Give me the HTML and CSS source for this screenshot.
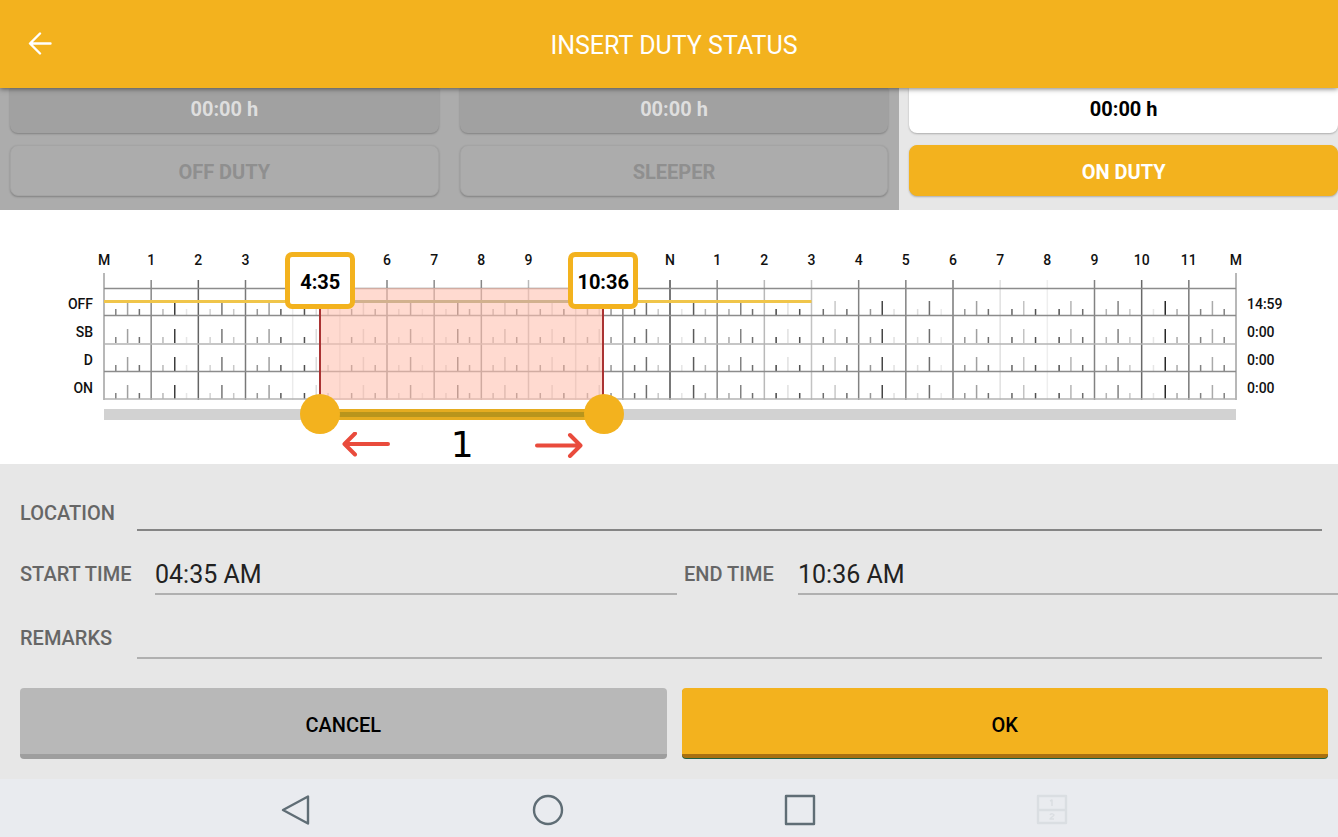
FILE: index.html
```html
<!DOCTYPE html>
<html lang="en">
<head>
<meta charset="utf-8">
<meta name="viewport" content="width=device-width, initial-scale=1">
<title>Insert Duty Status</title>
<link rel="stylesheet" href="styles.css">
</head>
<body>
<header class="app-bar">
  <button class="back" type="button" aria-label="Back">
    <svg width="24" height="24" viewBox="0 0 24 24" fill="none" stroke="currentColor" stroke-width="2.4" stroke-linecap="round" stroke-linejoin="round"><path d="M12 1.500 2 11.500l10 10M2.500 11.500H22.500"/></svg>
  </button>
  <h1 class="title">INSERT DUTY STATUS</h1>
</header>

<main class="content">
  <section class="statuses">
    <div class="status">
      <div class="status-time">00:00 h</div>
      <button class="status-button" type="button">OFF DUTY</button>
    </div>
    <div class="status">
      <div class="status-time">00:00 h</div>
      <button class="status-button" type="button">SLEEPER</button>
    </div>
    <div class="status status-active">
      <div class="status-time">00:00 h</div>
      <button class="status-button" type="button">ON DUTY</button>
    </div>
  </section>

  <section class="log">
    <div class="hours">
      <span>M</span><span>1</span><span>2</span><span>3</span><span></span><span></span><span>6</span><span>7</span><span>8</span><span>9</span><span></span><span></span><span>N</span><span>1</span><span>2</span><span>3</span><span>4</span><span>5</span><span>6</span><span>7</span><span>8</span><span>9</span><span>10</span><span>11</span><span>M</span>
    </div>
    <div class="row-names"><span>OFF</span><span>SB</span><span>D</span><span>ON</span></div>
    <div class="plot">
      <svg class="grid-lines" viewBox="0 0 1440 127" preserveAspectRatio="none" aria-hidden="true">
        <g id="ticks"></g>
        <path class="rule" d="M0 15.500H1440M0 42.500H1440M0 98.500H1440"/>
        <path class="rule rule-light" d="M0 71H1440M0 126H1440"/>
        <path class="duty-line" d="M0 28.500H275M636 28.500H900"/>
        <path class="duty-line duty-line-covered" d="M275 28.500H636"/>
      </svg>
      <div class="selection"></div>
      <output class="bubble bubble-start" for="range-start">4:35</output>
      <output class="bubble bubble-end" for="range-end">10:36</output>
    </div>
    <div class="totals"><span>14:59</span><span>0:00</span><span>0:00</span><span>0:00</span></div>
    <div class="slider">
      <div class="slider-fill"></div>
      <input id="range-start" class="range" type="range" min="0" max="1440" value="275" aria-label="Start of duty period">
      <input id="range-end" class="range" type="range" min="0" max="1440" value="636" aria-label="End of duty period">
    </div>
    <div class="hint">
      <svg width="48" height="26" viewBox="0 0 48 26"><path d="M13 1.500 2.500 12l10.500 10.500M3 12H46"/></svg>
      <span>1</span>
      <svg width="48" height="26" viewBox="0 0 48 26"><path d="M35 3 45.500 13.500 35 24M45 13.500H2"/></svg>
    </div>
  </section>

  <form class="form">
    <div class="field field-location">
      <label for="location">LOCATION</label>
      <input id="location" type="text">
    </div>
    <div class="times">
      <div class="field">
        <label for="start">START TIME</label>
        <input id="start" type="text" value="04:35 AM">
      </div>
      <div class="field field-end">
        <label for="end">END TIME</label>
        <input id="end" type="text" value="10:36 AM">
      </div>
    </div>
    <div class="field">
      <label for="remarks">REMARKS</label>
      <input id="remarks" type="text">
    </div>
    <div class="actions">
      <button class="action action-cancel" type="button">CANCEL</button>
      <button class="action action-ok" type="button">OK</button>
    </div>
  </form>
</main>

<nav class="system-bar">
  <button type="button" aria-label="Back"><svg width="34" height="34" viewBox="0 0 34 34"><path d="M29 3.500v27L4 17z"/></svg></button>
  <button type="button" aria-label="Home"><svg width="34" height="34" viewBox="0 0 34 34"><circle cx="17" cy="17" r="14"/></svg></button>
  <button type="button" aria-label="Recent apps"><svg width="34" height="34" viewBox="0 0 34 34"><path d="M3 3h28v28H3z"/></svg></button>
  <button class="dim" type="button" aria-label="Split screen"><svg width="34" height="34" viewBox="0 0 34 34"><path d="M3 3h28v27H3zM3 17h28"/><path class="thin" d="M15 8l2-1v6M15 22c1-2 4-1 4 0s-4 3-4 4h4"/></svg></button>
</nav>
<script src="grid.js"></script>
</body>
</html>
```
FILE: styles.css
```css
* {
  box-sizing: border-box;
}

body {
  margin: 0;
  min-height: 100vh;
  display: flex;
  flex-direction: column;
  overflow-x: hidden;
  background: #e7e7e7;
  font-family: Roboto, "Liberation Sans", sans-serif;
}

button,
input {
  font-family: inherit;
}

.app-bar {
  position: relative;
  z-index: 2;
  display: grid;
  grid-template-columns: 80px 1fr 80px;
  align-items: center;
  height: 88px;
  background: #f3b21e;
  color: #fff;
  box-shadow: 0 1px 5px rgba(0, 0, 0, 0.5);
}

.back {
  display: flex;
  justify-content: center;
  padding: 0;
  border: 0;
  background: none;
  color: inherit;
}

.title {
  margin: 4px 0 0 10px;
  font-size: 25px;
  line-height: 30px;
  font-weight: 400;
  text-align: center;
}

.content {
  flex: 1;
  overflow: hidden;
}

.statuses {
  display: grid;
  grid-template-columns: repeat(3, 1fr);
  margin-right: -11px;
}

.status {
  display: grid;
  gap: 12px;
  padding: 0 11px 14px 10px;
  background: #acacac;
}

.status-time {
  height: 45px;
  padding-top: 9px;
  border-radius: 0 0 8px 8px;
  background: #a1a1a1;
  box-shadow: 0 1px 2px rgba(0, 0, 0, 0.25);
  color: #dedede;
  font-size: 20px;
  line-height: 24px;
  font-weight: 700;
  text-align: center;
}

.status-button {
  height: 51px;
  padding: 2px 0 0;
  border: 1px solid #a4a4a4;
  border-radius: 8px;
  background: #acacac;
  box-shadow: 0 1px 2px rgba(0, 0, 0, 0.25);
  color: #8f8f8f;
  font-size: 20px;
  line-height: 24px;
  font-weight: 700;
}

.status-active {
  background: #e7e7e7;
}

.status-active .status-time {
  background: #fff;
  color: #000;
}

.status-active .status-button {
  border-color: #f3b21e;
  background: #f3b21e;
  color: #fff;
}

.log {
  display: grid;
  grid-template-columns: 104px 1fr 102px;
  height: 254px;
  padding-top: 40px;
  align-content: start;
  background: #fff;
  color: #111;
  font-size: 14px;
  line-height: 20px;
  font-weight: 500;
}

.hours {
  grid-column: 2;
  display: grid;
  grid-template-columns: repeat(25, 1fr);
  height: 23px;
  margin: 0 -2.0833%;
  text-align: center;
}

.row-names,
.totals {
  display: grid;
  grid-template-rows: repeat(4, 28px);
  align-items: center;
  padding-top: 17px;
  height: 127px;
}

.row-names {
  grid-column: 1;
  padding-right: 11px;
  text-align: right;
}

.totals {
  padding-left: 11px;
}

.plot {
  position: relative;
  height: 127px;
}

.grid-lines {
  display: block;
  width: 100%;
  height: 100%;
  overflow: visible;
  fill: none;
}

.grid-lines path {
  vector-effect: non-scaling-stroke;
}

.rule {
  stroke: #8c8c8c;
  stroke-width: 1.5;
}

.rule-light {
  stroke: #b4b4b4;
}

.duty-line {
  stroke: #f0c54a;
  stroke-width: 3;
}

.duty-line-covered {
  stroke: #8f9a5a;
}

.selection {
  position: absolute;
  top: 15px;
  bottom: 0;
  left: 19%;
  width: 25.2%;
  border: solid #a33;
  border-width: 0 2px;
  background: rgba(255, 193, 177, 0.6);
}

.bubble {
  position: absolute;
  top: -21px;
  width: 70px;
  height: 57px;
  transform: translateX(-50%);
  border: 5px solid #f3b21e;
  border-radius: 7px;
  background: #fff;
  color: #000;
  font-size: 20px;
  line-height: 50px;
  font-weight: 700;
  text-align: center;
}

.bubble-start {
  left: 19.1%;
}

.bubble-end {
  left: 44.1%;
}

.slider {
  grid-column: 2;
  position: relative;
  height: 11px;
  margin-top: 9px;
  background: #d2d2d2;
}

.slider-fill {
  position: absolute;
  top: 0;
  bottom: 0;
  left: 19.1%;
  width: 25.1%;
  border: solid #e5ac20;
  border-width: 3px 0;
  background: #b8951c;
}

.range {
  position: absolute;
  top: -15px;
  left: -20px;
  width: calc(100% + 40px);
  height: 40px;
  margin: 0;
  appearance: none;
  background: none;
  pointer-events: none;
}

.range::-webkit-slider-runnable-track {
  height: 40px;
  background: none;
}

.range::-webkit-slider-thumb {
  width: 40px;
  height: 40px;
  appearance: none;
  border: 0;
  border-radius: 50%;
  background: #f3b21e;
  pointer-events: auto;
}

.hint {
  grid-column: 2;
  display: flex;
  align-items: center;
  justify-content: space-between;
  width: 21.3%;
  margin: 5px 0 0 21%;
  color: #000;
  font-family: "DejaVu Sans", sans-serif;
  font-size: 36px;
  line-height: 40px;
  font-weight: 400;
}

.hint path {
  fill: none;
  stroke: #e94b3c;
  stroke-width: 4;
  stroke-linecap: round;
  stroke-linejoin: round;
}

.form {
  padding: 24px 0 20px;
}

.field {
  display: grid;
  grid-template-columns: 117px 1fr;
  align-items: center;
  padding: 0 16px 0 20px;
}

.field label {
  color: #666;
  font-size: 20px;
  line-height: 24px;
  font-weight: 500;
  white-space: nowrap;
}

.field input {
  width: 100%;
  min-width: 0;
  height: 43px;
  padding: 4px 0 0;
  border: 0;
  border-bottom: 2px solid #b0b0b0;
  border-radius: 0;
  outline: 0;
  background: none;
  color: #222;
  font-size: 25px;
}

.field-location label {
  padding-top: 6px;
}

.field-location input {
  border-bottom-color: #858585;
}

.times {
  display: grid;
  grid-template-columns: 677fr 661fr;
  margin: 21px 0;
}

.times .field {
  grid-template-columns: 135px 1fr;
  padding-right: 0;
}

.times .field-end {
  grid-template-columns: 114px 1fr;
  padding-left: 7px;
}

.actions {
  display: grid;
  grid-template-columns: 1fr 1fr;
  gap: 15px;
  padding: 29px 10px 0 20px;
}

.action {
  height: 71px;
  padding: 7px 0 0;
  border: 0;
  border-bottom: 5px solid;
  border-radius: 4px;
  color: #000;
  font-size: 20px;
  line-height: 24px;
  font-weight: 500;
}

.action-cancel {
  border-color: #9e9e9e;
  background: #b8b8b8;
}

.action-ok {
  height: 70px;
  border-bottom-width: 4px;
  border-color: #a87010;
  background: #f3b21e;
  box-shadow: 0 1px #1f6044;
}

.system-bar {
  display: grid;
  grid-template-columns: repeat(4, 1fr);
  justify-items: center;
  align-items: center;
  height: 58px;
  padding: 4px 12% 0 12.7%;
  background: #e9ebef;
}

.system-bar button {
  display: flex;
  padding: 0;
  border: 0;
  background: none;
  color: #5f6d75;
}

.system-bar svg {
  fill: none;
  stroke: currentColor;
  stroke-width: 2.4;
  stroke-linejoin: round;
}

.system-bar .dim {
  color: #dadee2;
}

.system-bar .thin {
  stroke-width: 1.5;
}
```
FILE: grid.js
```js
// Line shades, 0 (black) to 255 (white), for each hour of the day.
const hourShades = [160, 135, 100, 120, 235, 230, 130, 140, 135, 185, 215, 140, 75, 135, 185, 195, 130, 130, 120, 225, 238, 130, 105, 120, 160];
const quarterShades = [130, 185, 210, 150, 80, 130, 210, 210, 170, 130, 150, 110, 230, 170, 70, 110, 150, 220, 150, 100, 80, 180, 230, 130];
const halfShades = [160, 60, 120, 160, 220, 210, 130, 100, 180, 210, 210, 110, 90, 130, 225, 200, 70, 110, 160, 195, 180, 130, 40, 170];
const threeQuarterShades = [110, 230, 200, 90, 200, 140, 225, 140, 120, 100, 150, 200, 180, 110, 80, 110, 225, 235, 110, 80, 110, 200, 170, 130];
const baselines = [42, 70, 98, 126];

const ticks = document.getElementById("ticks");

function addPath(d, shade, width) {
  const path = document.createElementNS("http://www.w3.org/2000/svg", "path");
  path.setAttribute("d", d);
  path.setAttribute("stroke", `rgb(${shade},${shade},${shade})`);
  path.setAttribute("stroke-width", width);
  ticks.append(path);
}

function addTicks(minute, height, shade) {
  addPath(baselines.map((y) => `M${minute} ${y}v${-height}`).join(""), shade, 1.5);
}

hourShades.forEach((shade, hour) => {
  const top = hour % 24 === 0 ? 0 : 7;
  addPath(`M${hour * 60} ${top}V127`, shade, 1.5);
});

halfShades.forEach((shade, hour) => {
  addTicks(hour * 60 + 15, 6, quarterShades[hour]);
  addTicks(hour * 60 + 30, 14, shade);
  addTicks(hour * 60 + 45, 6, threeQuarterShades[hour]);
});
```
